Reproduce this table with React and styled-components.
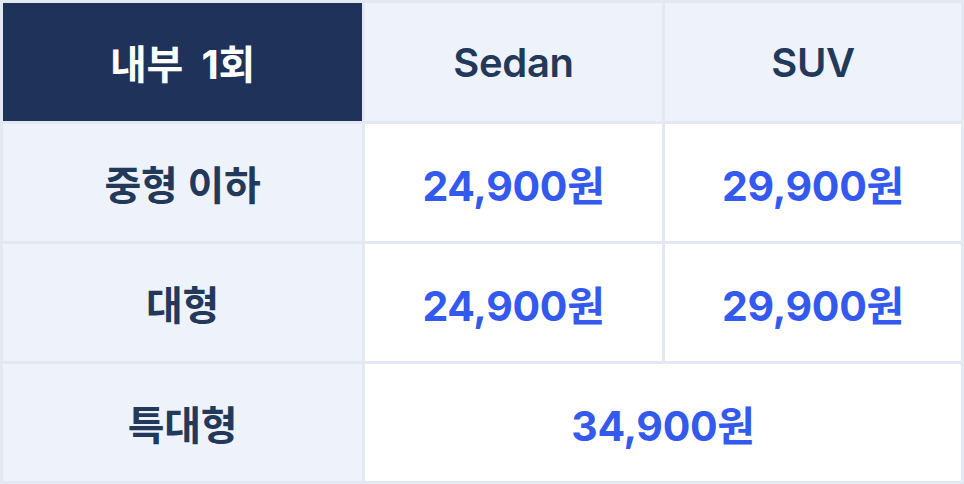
import React from 'react';
import styled, { createGlobalStyle } from 'styled-components';

const GlobalStyle = createGlobalStyle`
    html, body {
        margin: 0;
        padding: 0;
        background: #ffffff;
    }
    body {
        font-family: Inter, "Noto Sans CJK KR", sans-serif;
    }
`;

const Table = styled.div`
    width: 964px;
    height: 484px;
    box-sizing: border-box;
    display: grid;
    grid-template-columns: 359px 297px 296px;
    grid-template-rows: 118px 117px 117px 117px;
    gap: 3px;
    padding: 3px;
    background: #e3e9f3;
`;

const Cell = styled.div`
    display: flex;
    align-items: center;
    justify-content: center;
    grid-column: ${(props) => props.$span ? `span ${props.$span}` : 'auto'};
    background: ${(props) => {
        if (props.$kind === 'corner') return '#1f3259';
        if (props.$kind === 'head') return '#eef3fb';
        return '#ffffff';
    }};
    color: ${(props) => {
        if (props.$kind === 'corner') return '#ffffff';
        if (props.$kind === 'price') return '#3459ee';
        return '#23395a';
    }};
    font-size: ${(props) => (props.$kind === 'price' ? '41px' : '40px')};
    font-weight: ${(props) => (props.$kind === 'price' || props.$kind === 'corner' ? 700 : 600)};
    letter-spacing: -0.3px;
    white-space: pre;
`;

const rows = [
    { label: '중형 이하', prices: ['24,900원', '29,900원'] },
    { label: '대형', prices: ['24,900원', '29,900원'] },
    { label: '특대형', prices: ['34,900원'] },
];

const App = () => {
    return (
        <>
            <GlobalStyle />
            <Table>
                <Cell $kind="corner">{'내부  1회'}</Cell>
                <Cell $kind="head">Sedan</Cell>
                <Cell $kind="head">SUV</Cell>
                {rows.map((row) => (
                    <React.Fragment key={row.label}>
                        <Cell $kind="head">{row.label}</Cell>
                        {row.prices.map((price, i) => (
                            <Cell
                                key={i}
                                $kind="price"
                                $span={row.prices.length === 1 ? 2 : undefined}
                            >
                                {price}
                            </Cell>
                        ))}
                    </React.Fragment>
                ))}
            </Table>
        </>
    );
};

export default App;
